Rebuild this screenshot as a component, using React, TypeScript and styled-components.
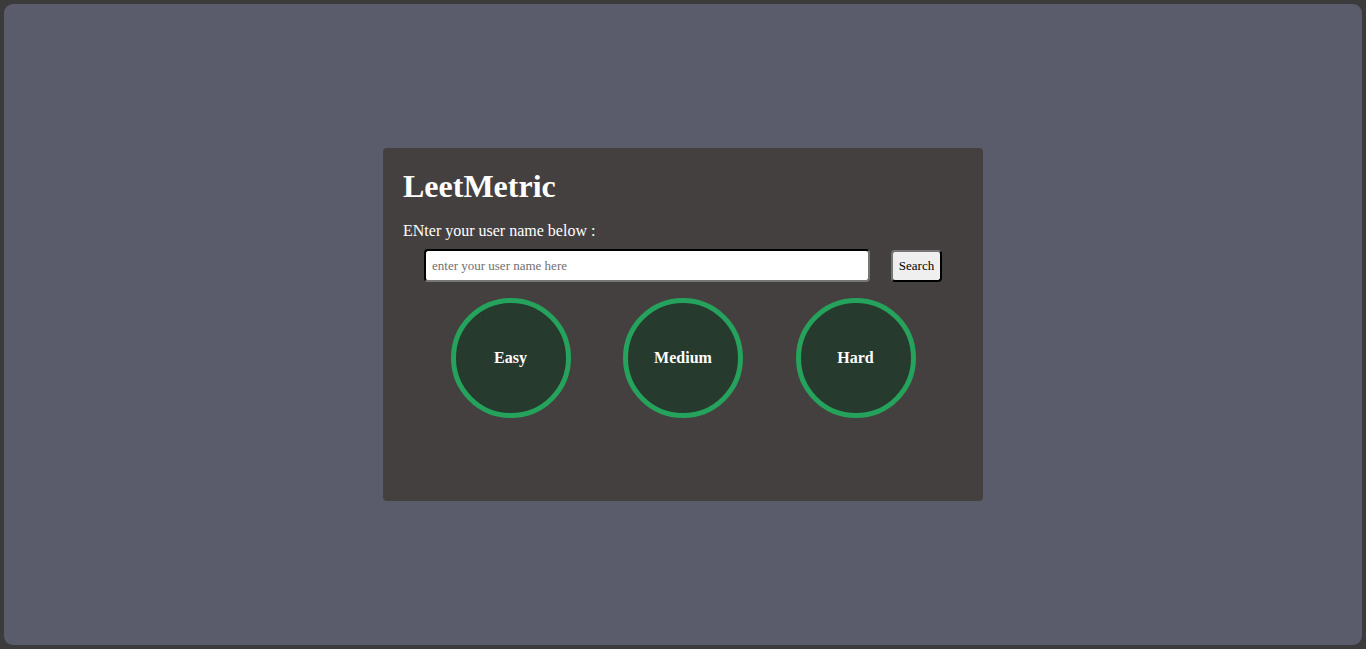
import React from "react";
import styled, { createGlobalStyle } from "styled-components";

const colors = {
    frame: "#3b3b3b",
    page: "#5b5c6b",
    card: "#454040",
    ring: "#25a25b",
    ringFill: "#263a2e",
    white: "#ffffff",
};

const GlobalStyle = createGlobalStyle`
    * { box-sizing: border-box; }
    html, body {
        margin: 0;
        padding: 0;
        background-color: ${colors.frame};
        font-family: "Liberation Serif", "Times New Roman", serif;
    }
`;

const Page = styled.div`
    margin: 4px;
    height: 641px;
    border-radius: 9px;
    background-color: ${colors.page};
    display: flex;
    align-items: center;
    justify-content: center;
`;

const Card = styled.div`
    width: 600px;
    height: 353px;
    padding: 20px;
    border-radius: 4px;
    background-color: ${colors.card};
    color: ${colors.white};
    display: flex;
    flex-direction: column;
`;

const Title = styled.h1`
    margin: 0 0 17px;
    font-size: 32px;
    font-weight: bold;
`;

const Label = styled.p`
    margin: 0 0 9px;
    font-size: 16px;
`;

const SearchRow = styled.div`
    display: flex;
    justify-content: space-evenly;
    align-items: center;
    height: 33px;
`;

const UserInput = styled.input`
    width: 446px;
    height: 33px;
    padding: 0 6px;
    border: 2px inset #767676;
    border-top-color: #1e1e1e;
    border-left-color: #1e1e1e;
    border-radius: 4px;
    background: ${colors.white};
    font-family: "Liberation Serif", serif;
    font-size: 13px;
    &::placeholder { color: #707070; }
`;

const SearchButton = styled.button`
    width: 51px;
    height: 32px;
    padding: 0;
    border: 2px outset #767676;
    border-right-color: #111;
    border-bottom-color: #111;
    border-radius: 4px;
    background: #efefef;
    color: #000;
    font-family: "Liberation Serif", serif;
    font-size: 13px;
`;

const Stats = styled.div`
    margin-top: 16px;
    display: flex;
    justify-content: center;
    gap: 52.5px;
`;

const Circle = styled.div`
    width: 120px;
    height: 120px;
    border-radius: 50%;
    border: 5px solid ${colors.ring};
    background-color: ${colors.ringFill};
    display: flex;
    align-items: center;
    justify-content: center;
    font-weight: bold;
    font-size: 16px;
`;

export default function App() {
    return (
        <>
            <GlobalStyle />
            <Page>
                <Card>
                    <Title>LeetMetric</Title>
                    <Label>ENter your user name below :</Label>
                    <SearchRow>
                        <UserInput placeholder="enter your user name here" />
                        <SearchButton>Search</SearchButton>
                    </SearchRow>
                    <Stats>
                        <Circle>Easy</Circle>
                        <Circle>Medium</Circle>
                        <Circle>Hard</Circle>
                    </Stats>
                </Card>
            </Page>
        </>
    );
}
